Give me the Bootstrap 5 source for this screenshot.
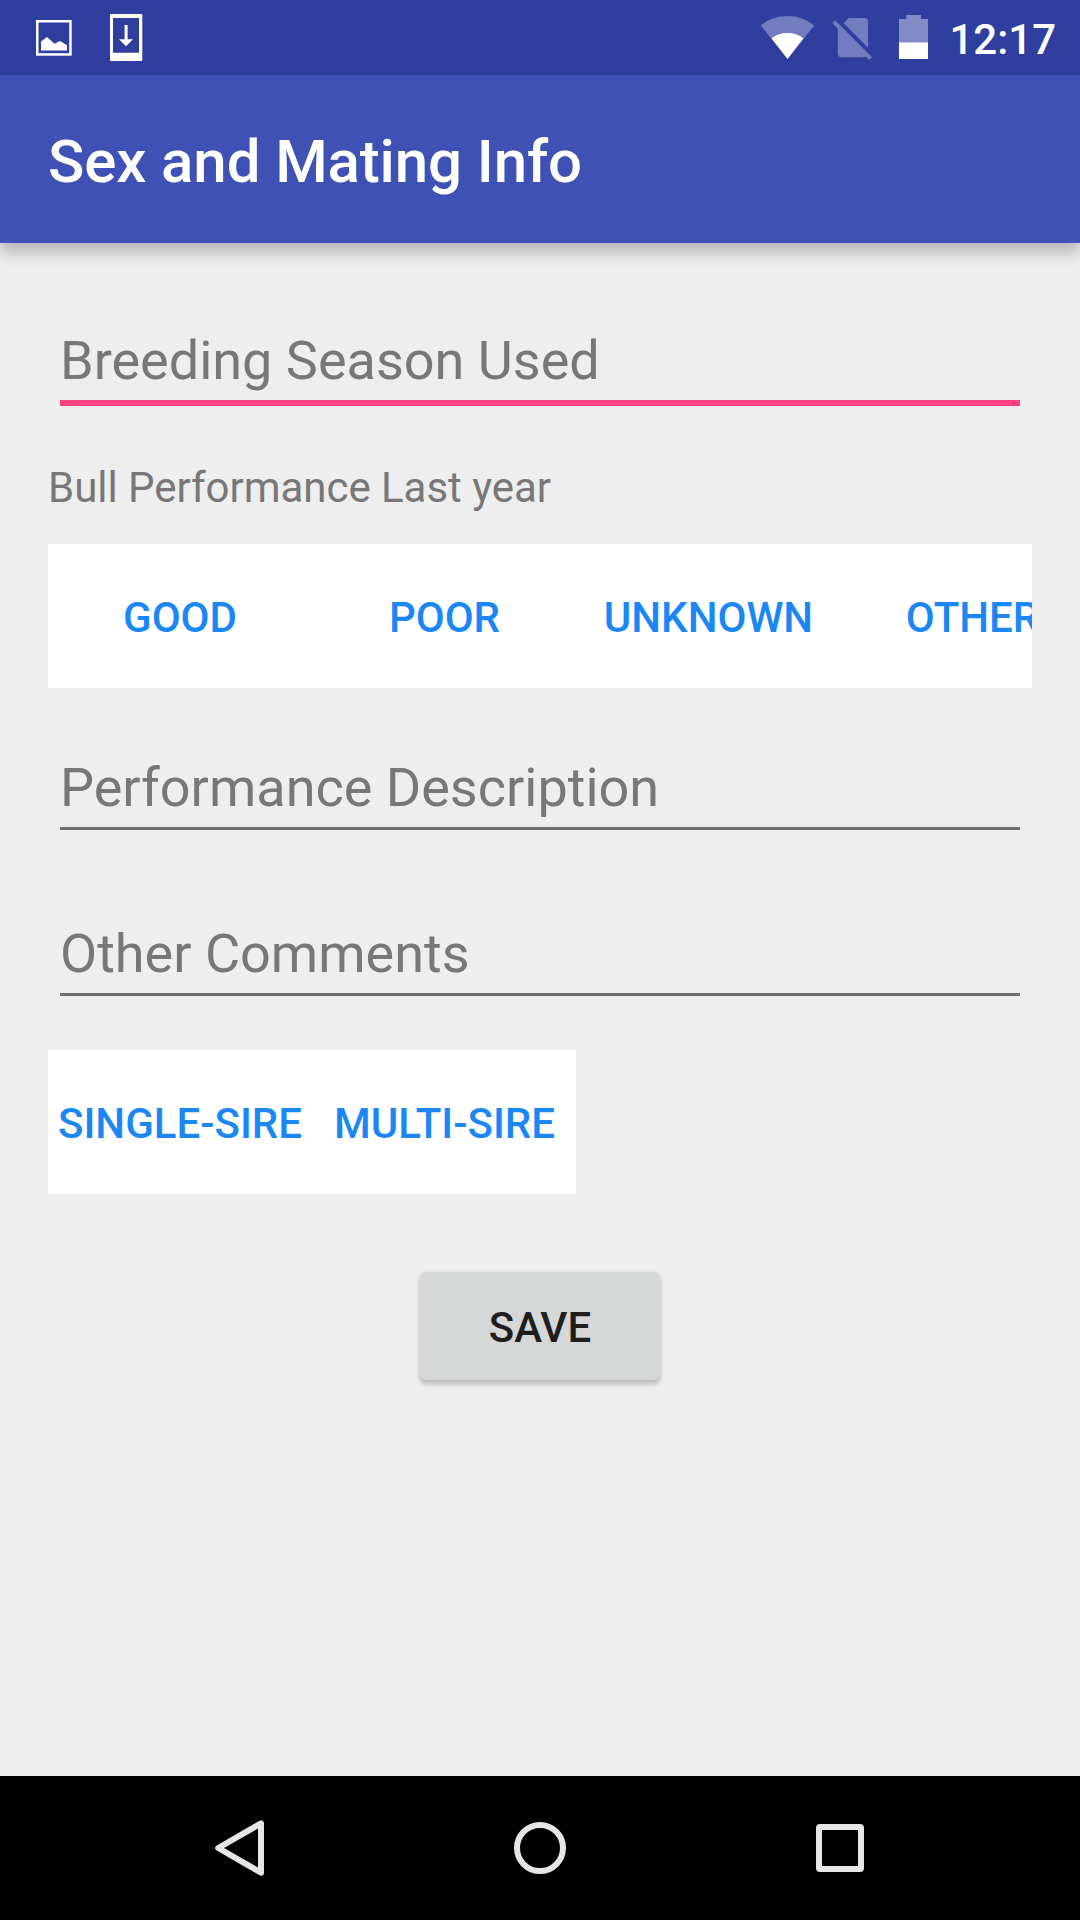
<!DOCTYPE html>
<html lang="en">
<head>
<meta charset="utf-8">
<meta name="viewport" content="width=device-width, initial-scale=1">
<title>Sex and Mating Info</title>
<link href="https://cdn.jsdelivr.net/npm/bootstrap@5.3.0/dist/css/bootstrap.min.css" rel="stylesheet">
<style>
  body { font-family: Roboto, "Liberation Sans", sans-serif; background: #eee; }
  .screen { width: 1080px; height: 1920px; }
  .status-bar { height: 75px; background: #303f9f; }
  .status-bar svg { display: block; }
  .clock { width: 132px; height: 75px; padding: 4px 24px 0 0; font-size: 42px; font-weight: 500; line-height: 71px; text-align: right; white-space: nowrap; }
  .app-bar { height: 168px; background: #3f51b5; padding: 6px 48px 0; box-shadow: 0 12px 12px rgba(0,0,0,.17), 0 3px 12px rgba(0,0,0,.07); z-index: 1; }
  .app-title { font-size: 60px; font-weight: 500; line-height: 70px; letter-spacing: -.11px; }
  .form-area { padding: 82px 48px 0; }
  .field { display: block; margin: 0 12px; height: 78px; font-size: 54px; line-height: 72px; color: #777; border-bottom: 3px solid #6e6e6e; }
  .field.active { height: 81px; border-bottom: 6px solid #ff4081; }
  .caption-text { font-size: 42px; line-height: 60px; letter-spacing: -.03px; color: #777; margin: 52px 0 26px; }
  .toggle-strip { height: 144px; }
  .toggle-strip .btn { flex: 0 0 264px; font-size: 42px; font-weight: 500; line-height: 60px; color: #1b87f5; padding: 3px 0 0; border: 0; border-radius: 0; }
  .toggle-strip .btn + .btn { padding-left: 1px; }
  .gap-a { margin-top: 64px; }
  .gap-b { margin-top: 88px; }
  .gap-c { margin-top: 54px; }
  .save-btn { width: 240px; height: 108px; margin-top: 78px; padding: 3px 0 0; font-size: 42px; font-weight: 500; line-height: 60px; color: #1e1e1e; background: #d6d7d7; border: 0; border-radius: 6px; box-shadow: 0 5px 4px rgba(0,0,0,.17), 0 0 4px rgba(0,0,0,.1); }
  .nav-bar { height: 144px; background: #000; }
</style>
</head>
<body>
<div class="screen d-flex flex-column overflow-hidden">
  <header class="status-bar d-flex justify-content-between text-white flex-shrink-0">
    <svg width="160" height="75" viewBox="0 0 160 75" aria-hidden="true">
      <rect x="37.25" y="21.25" width="33.2" height="33.2" fill="none" stroke="#fff" stroke-width="2.5"/>
      <path d="M41 50.5V41.5L47 37L54.5 43.7L60 41L67 45.3V50.5Z" fill="#fff"/>
      <path fill="#fff" fill-rule="evenodd" d="M111 14H141.3Q142.3 14 142.3 15V60Q142.3 61 141.3 61H111Q110 61 110 60V15Q110 14 111 14ZM113 18V52.7H139V18Z"/>
      <path d="M124.6 25H127.6V39.3H133L126 46.3L119 39.3H124.6Z" fill="#fff"/>
    </svg>
    <div class="d-flex">
      <svg width="200" height="75" viewBox="740 0 200 75" aria-hidden="true">
        <path d="M787.5 59L760.8 25.5Q772 16 787.5 16T814.2 25.5Z" fill="#fff" fill-opacity=".32"/>
        <path d="M787.5 59L771.5 38.3Q778.5 33 787.5 33T803.5 38.3Z" fill="#fff"/>
        <g fill="#fff" fill-opacity=".32">
          <path d="M848.5 18H864.5Q868 18 868 21.5V47.8L843.7 23.2Z"/>
          <path d="M835 20.3L872 57.2L869.3 60L866 56.6Q865 57.2 864 57.2H842Q837.8 57.2 837.8 53V28.5L832.3 23Z"/>
        </g>
        <path d="M899 19H906.3V15H921V19H928V42.3H899Z" fill="#fff" fill-opacity=".4"/>
        <rect x="899" y="42.3" width="29" height="16.7" fill="#fff"/>
      </svg>
      <div class="clock ms-2">12:17</div>
    </div>
  </header>
  <nav class="app-bar d-flex align-items-center position-relative flex-shrink-0">
    <h1 class="app-title text-white m-0">Sex and Mating Info</h1>
  </nav>
  <main class="form-area flex-grow-1">
    <label class="field active">Breeding Season Used</label>
    <p class="caption-text">Bull Performance Last year</p>
    <div class="toggle-strip d-flex bg-white overflow-hidden">
      <button type="button" class="btn">GOOD</button>
      <button type="button" class="btn">POOR</button>
      <button type="button" class="btn">UNKNOWN</button>
      <button type="button" class="btn">OTHER</button>
    </div>
    <label class="field gap-a">Performance Description</label>
    <label class="field gap-b">Other Comments</label>
    <div class="gap-c d-flex">
      <div class="toggle-strip d-flex bg-white">
        <button type="button" class="btn">SINGLE-SIRE</button>
        <button type="button" class="btn">MULTI-SIRE</button>
      </div>
    </div>
    <div class="d-flex justify-content-center">
      <button type="button" class="btn save-btn">SAVE</button>
    </div>
  </main>
  <footer class="nav-bar flex-shrink-0">
    <svg class="d-block" width="1080" height="144" viewBox="0 1776 1080 144" fill="none" stroke="#e6e6e6" stroke-width="6" stroke-linejoin="round" aria-hidden="true">
      <path d="M218.2 1848L261 1823.3V1872.7Z"/>
      <circle cx="540" cy="1848" r="23"/>
      <rect x="819" y="1827" width="42" height="42" rx="1"/>
    </svg>
  </footer>
</div>
<script src="https://cdn.jsdelivr.net/npm/bootstrap@5.3.0/dist/js/bootstrap.bundle.min.js"></script>
</body>
</html>
